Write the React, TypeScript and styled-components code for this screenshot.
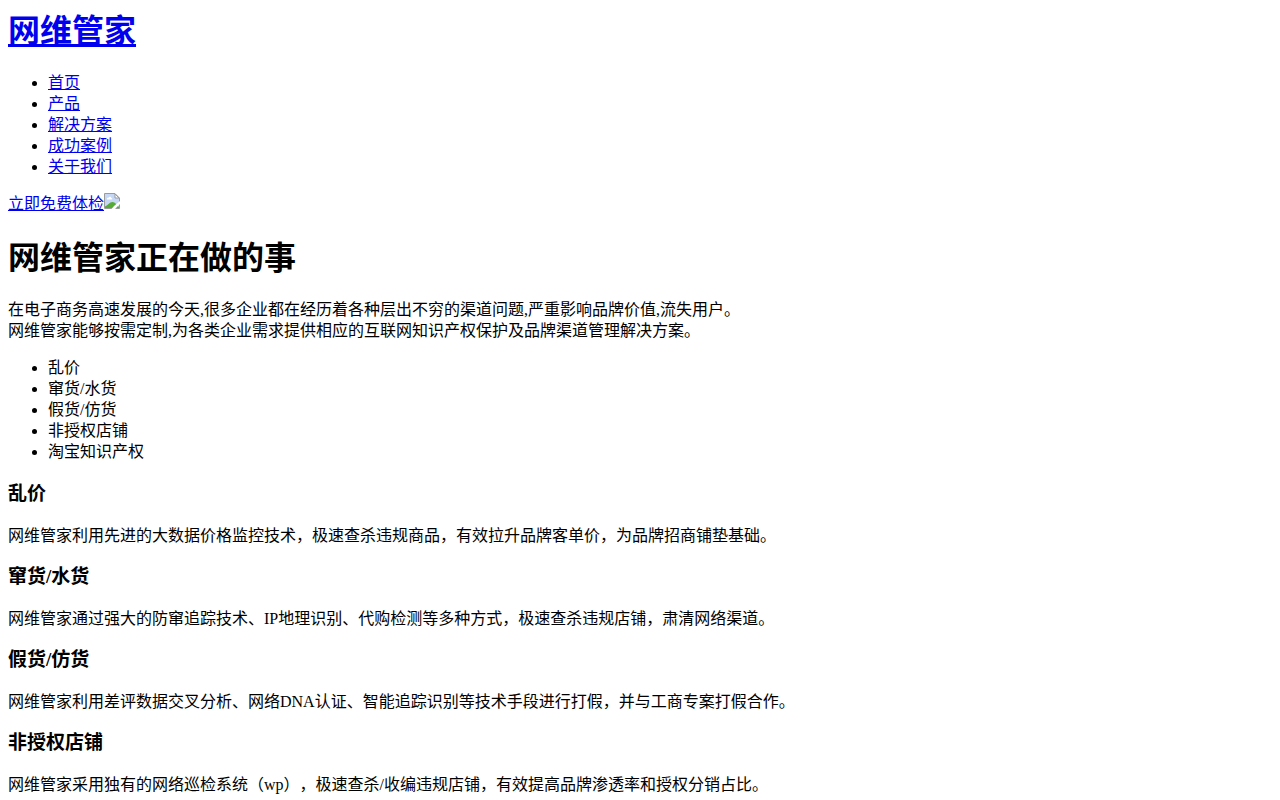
import React from "react";
import styled, { createGlobalStyle } from "styled-components";

const GlobalStyle = createGlobalStyle`
  body {
    margin: 8px;
    background: #fff;
    color: #000;
    font-family: "Liberation Serif", "Noto Sans CJK SC", serif;
    font-size: 16px;
    line-height: 21px;
    text-spacing-trim: space-all;
  }
`;

const Title = styled.h1`
  margin: 0 0 17px;
  font-size: 32px;
  line-height: 47px;
  font-weight: 700;
`;

const Link = styled.a`
  color: #0000ee;
  text-decoration: underline;
`;

const List = styled.ul`
  margin: 0 0 16px;
  padding-left: 40px;
  list-style: disc;
`;

const Action = styled.div`
  display: flex;
  align-items: flex-start;
  margin-bottom: 21px;
`;

const Paragraph = styled.p`
  margin: 0 0 16px;
`;

const Topics = styled.div`
  display: flex;
  flex-direction: column;
  gap: 19px;
  margin-top: 20px;
`;

const TopicTitle = styled.h3`
  margin: 0 0 19px;
  font-size: 19px;
  line-height: 24px;
  font-weight: 700;
`;

const TopicText = styled.p`
  margin: 0;
`;

const navItems = ["首页", "产品", "解决方案", "成功案例", "关于我们"];
const issues = ["乱价", "窜货/水货", "假货/仿货", "非授权店铺", "淘宝知识产权"];
const topics = [
  {
    title: "乱价",
    text: "网维管家利用先进的大数据价格监控技术，极速查杀违规商品，有效拉升品牌客单价，为品牌招商铺垫基础。",
  },
  {
    title: "窜货/水货",
    text: "网维管家通过强大的防窜追踪技术、IP地理识别、代购检测等多种方式，极速查杀违规店铺，肃清网络渠道。",
  },
  {
    title: "假货/仿货",
    text: "网维管家利用差评数据交叉分析、网络DNA认证、智能追踪识别等技术手段进行打假，并与工商专案打假合作。",
  },
  {
    title: "非授权店铺",
    text: "网维管家采用独有的网络巡检系统（wp），极速查杀/收编违规店铺，有效提高品牌渗透率和授权分销占比。",
  },
];

const PictureIcon = () => (
  <svg width="16" height="16" viewBox="0 0 16 16" aria-hidden="true">
    <path d="M1 1H11L15 5V15H1Z" fill="#c6d7f5" />
    <path d="M3 6.5C2.4 5 4 4.4 4.5 4.8C5 3.2 7.2 3.5 7.3 5C8.5 5 8.5 6.500 7.600 6.500Z" fill="#fff" />
    <path d="M1 15V13.5C3.5 12.500 5.500 9 8.500 9C11 9 13 12 15 14V15Z" fill="#55ab35" />
    <path d="M0.5 0.5H11L15.5 5V15.5H0.5Z" fill="none" stroke="#9b9b9b" />
    <path d="M11 1V5H15Z" fill="#fff" stroke="#9b9b9b" />
    <path d="M16 8V11L11 16H7.500L10 13Z" fill="#fff" />
  </svg>
);

export default function App() {
  return (
    <>
      <GlobalStyle />
      <header>
        <Title>
          <Link href="#">网维管家</Link>
        </Title>
        <nav>
          <List>
            {navItems.map((item) => (
              <li key={item}>
                <Link href="#">{item}</Link>
              </li>
            ))}
          </List>
        </nav>
        <Action>
          <Link href="#">立即免费体检</Link>
          <PictureIcon />
        </Action>
      </header>
      <main>
        <Title>网维管家正在做的事</Title>
        <Paragraph>
          在电子商务高速发展的今天,很多企业都在经历着各种层出不穷的渠道问题,严重影响品牌价值,流失用户。
          <br />
          网维管家能够按需定制,为各类企业需求提供相应的互联网知识产权保护及品牌渠道管理解决方案。
        </Paragraph>
        <List>
          {issues.map((issue) => (
            <li key={issue}>{issue}</li>
          ))}
        </List>
        <Topics>
          {topics.map((topic) => (
            <section key={topic.title}>
              <TopicTitle>{topic.title}</TopicTitle>
              <TopicText>{topic.text}</TopicText>
            </section>
          ))}
        </Topics>
      </main>
    </>
  );
}
